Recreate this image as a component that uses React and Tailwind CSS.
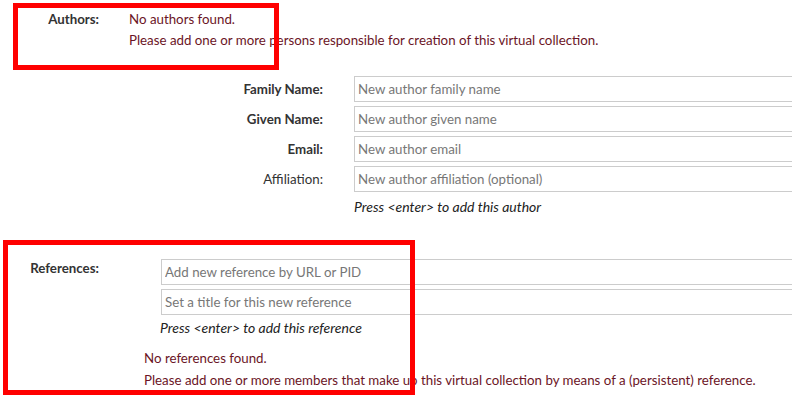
import React from 'react';

const font = { fontFamily: 'Lato, "Open Sans", sans-serif' };

const Field = ({ label, bold, placeholder }) => (
  <>
    <div className={`text-right text-[13.3px] leading-[26px] text-[#333] ${bold ? 'font-bold' : ''}`}>{label}</div>
    <input
      className="h-[26px] w-[460px] border border-[#ccc] px-[3px] text-[13.3px] text-[#333] placeholder:text-[#777] outline-none"
      placeholder={placeholder}
    />
  </>
);

export default function App() {
  return (
    <div className="relative w-[792px] h-[416px] overflow-hidden bg-white" style={font}>
      <div className="flex pt-[9px] text-[13.3px] leading-[21px]">
        <div className="w-[99px] shrink-0 text-right font-bold text-[#333]">Authors:</div>
        <div className="ml-[30px] text-[#6b1526]">
          <div>No authors found.</div>
          <div>Please add one or more persons responsible for creation of this virtual collection.</div>
        </div>
      </div>

      <div className="mt-[25px] grid grid-cols-[323px_1fr] gap-x-[31px] gap-y-[4px]">
        <Field label="Family Name:" bold placeholder="New author family name" />
        <Field label="Given Name:" bold placeholder="New author given name" />
        <Field label="Email:" bold placeholder="New author email" />
        <Field label="Affiliation:" placeholder="New author affiliation (optional)" />
        <div />
        <div className="text-[14px] leading-[21px] italic text-[#222]">Press &lt;enter&gt; to add this author</div>
      </div>

      <div className="mt-[42px] flex text-[13.3px]">
        <div className="w-[99px] shrink-0 text-right font-bold text-[#333] leading-[21px] -mt-[1px]">References:</div>
        <div className="ml-[62px] flex flex-col gap-[4px]">
          <input
            className="h-[26px] w-[640px] border border-[#ccc] px-[3px] text-[13.3px] placeholder:text-[#777] outline-none"
            placeholder="Add new reference by URL or PID"
          />
          <input
            className="h-[26px] w-[640px] border border-[#ccc] px-[3px] text-[13.3px] placeholder:text-[#777] outline-none"
            placeholder="Set a title for this new reference"
          />
        </div>
      </div>
      <div className="ml-[160px] mt-[2px] text-[14px] leading-[21px] italic text-[#222]">Press &lt;enter&gt; to add this reference</div>
      <div className="ml-[144px] mt-[9px] text-[13.3px] leading-[22px] text-[#6b1526]">
        <div>No references found.</div>
        <div>Please add one or more members that make up this virtual collection by means of a (persistent) reference.</div>
      </div>

      <div className="absolute left-[13px] top-[3px] w-[266px] h-[67px] border-[5px] border-[#ff0000]" />
      <div className="absolute left-[3px] top-[240px] w-[412px] h-[155px] border-[5px] border-[#ff0000]" />
    </div>
  );
}
